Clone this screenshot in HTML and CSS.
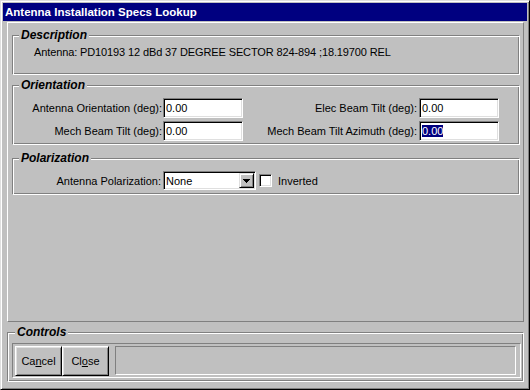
FILE: index.html
```html
<!DOCTYPE html>
<html lang="en">
<head>
    <meta charset="UTF-8">
    <title>Antenna Installation Specs Lookup</title>
    <link rel="stylesheet" href="styles.css">
</head>
<body>
    <div class="window">
        <div class="titlebar">Antenna Installation Specs Lookup</div>
        <div class="panel">
            <div class="group group-desc">
                <div class="group-title">Description</div>
                <div class="desc-text">Antenna: PD10193 12 dBd 37 DEGREE SECTOR 824-894 ;18.19700 REL</div>
            </div>
            <div class="group group-orient">
                <div class="group-title">Orientation</div>
                <div class="field-grid">
                    <label class="lbl">Antenna Orientation (deg):</label>
                    <div class="textbox">0.00</div>
                    <label class="lbl lbl-right">Elec Beam Tilt (deg):</label>
                    <div class="textbox">0.00</div>
                    <label class="lbl">Mech Beam Tilt (deg):</label>
                    <div class="textbox">0.00</div>
                    <label class="lbl lbl-right">Mech Beam Tilt Azimuth (deg):</label>
                    <div class="textbox"><span class="selected">0.00</span></div>
                </div>
            </div>
            <div class="group group-polar">
                <div class="group-title">Polarization</div>
                <div class="polar-row">
                    <label class="lbl polar-lbl">Antenna Polarization:</label>
                    <div class="select">
                        <span class="select-value">None</span>
                        <span class="drop-btn">
                            <svg width="7" height="4" viewBox="0 0 7 4"><path d="M0 0h7v1h-1v1h-1v1h-1v1h-1v-1h-1v-1h-1v-1h-1z" fill="#000"/></svg>
                        </span>
                    </div>
                    <span class="checkbox"></span>
                    <span class="check-label">Inverted</span>
                </div>
            </div>
        </div>
        <div class="group group-controls">
            <div class="group-title">Controls</div>
            <div class="button-well">
                <button class="btn">Ca<u>n</u>cel</button>
                <button class="btn">Cl<u>o</u>se</button>
                <div class="status"></div>
            </div>
        </div>
    </div>
</body>
</html>
```

FILE: styles.css
```css
* {
    box-sizing: border-box;
}
body {
    margin: 0;
    font-family: "Liberation Sans", Arial, sans-serif;
    font-size: 11px;
    color: #000;
    background-color: #c0c0c0;
}
.window {
    width: 530px;
    height: 390px;
    background-color: #c0c0c0;
    border: 1px solid;
    border-color: #dfdfdf #000 #000 #dfdfdf;
    box-shadow: inset 1px 1px #fff, inset -1px -1px #808080;
    padding: 2px;
}
.titlebar {
    height: 18px;
    line-height: 18px;
    padding-left: 2px;
    background-color: #000080;
    color: #fff;
    font-size: 11.5px;
    font-weight: bold;
}
.panel {
    height: 300px;
    margin: 1px 3px 0 4px;
    padding: 12px 3px 0 4px;
    border: 1px solid;
    border-color: #fff #808080 #808080 #fff;
}
.group {
    border: 1px solid;
    border-color: #808080 #fff #fff #808080;
    box-shadow: inset 1px 1px #fff, inset -1px -1px #808080;
}
.group-title {
    width: fit-content;
    margin: -8px 0 0 6px;
    padding: 0 2px;
    background-color: #c0c0c0;
    font-size: 12px;
    line-height: 14px;
    font-weight: bold;
    font-style: italic;
}
.group-desc {
    height: 40px;
}
.desc-text {
    margin-top: 4px;
    padding-left: 21px;
    line-height: 13px;
    letter-spacing: -0.12px;
}
.group-orient {
    height: 60px;
    margin-top: 10px;
}
.field-grid {
    display: grid;
    grid-template-columns: 150px 80px 176px 80px;
    grid-auto-rows: 20px;
    row-gap: 3px;
    align-items: center;
    margin-top: 6px;
}
.lbl {
    text-align: right;
    padding-right: 1px;
    white-space: nowrap;
}
.lbl-right {
    padding-right: 2px;
}
.textbox {
    height: 20px;
    line-height: 16px;
    padding: 1px 0 0 2px;
    background-color: #fff;
    border: 1px solid;
    border-color: #808080 #fff #fff #808080;
    box-shadow: inset 1px 1px #000, inset -1px -1px #dfdfdf;
}
.selected {
    background-color: #000080;
    color: #fff;
}
.group-polar {
    height: 37px;
    margin-top: 13px;
}
.polar-row {
    display: flex;
    align-items: center;
    margin-top: 6px;
}
.polar-lbl {
    width: 150px;
    padding-right: 2px;
}
.select {
    display: flex;
    align-items: center;
    width: 93px;
    height: 19px;
    padding: 1px;
    background-color: #fff;
    border: 1px solid;
    border-color: #808080 #fff #fff #808080;
    box-shadow: inset 1px 1px #000, inset -1px -1px #dfdfdf;
}
.select-value {
    flex: 1;
    padding-left: 1px;
}
.drop-btn {
    display: flex;
    align-items: center;
    justify-content: center;
    width: 15px;
    height: 15px;
    background-color: #c0c0c0;
    border: 1px solid;
    border-color: #dfdfdf #000 #000 #dfdfdf;
    box-shadow: inset 1px 1px #fff, inset -1px -1px #808080;
}
.checkbox {
    width: 13px;
    height: 13px;
    margin-left: 3px;
    background-color: #fff;
    border: 1px solid;
    border-color: #808080 #fff #fff #808080;
    box-shadow: inset 1px 1px #000, inset -1px -1px #dfdfdf;
}
.check-label {
    margin-left: 6px;
}
.group-controls {
    height: 50px;
    margin: 10px 3px 0 4px;
}
.group-controls .group-title {
    margin-left: 7px;
}
.button-well {
    display: flex;
    height: 35px;
    margin: 4px 2px 0 4px;
    padding: 2px 0 0 2px;
    border: 1px solid;
    border-color: #808080 #fff #fff #808080;
}
.btn {
    width: 47px;
    height: 30px;
    padding: 0;
    font: inherit;
    color: #000;
    background-color: #c0c0c0;
    border: 1px solid;
    border-color: #fff #000 #000 #fff;
    box-shadow: inset 1px 1px #dfdfdf, inset -1px -1px #808080;
}
.status {
    width: 401px;
    height: 29px;
    margin-left: 6px;
    border: 1px solid;
    border-color: #808080 #fff #fff #808080;
}
```
